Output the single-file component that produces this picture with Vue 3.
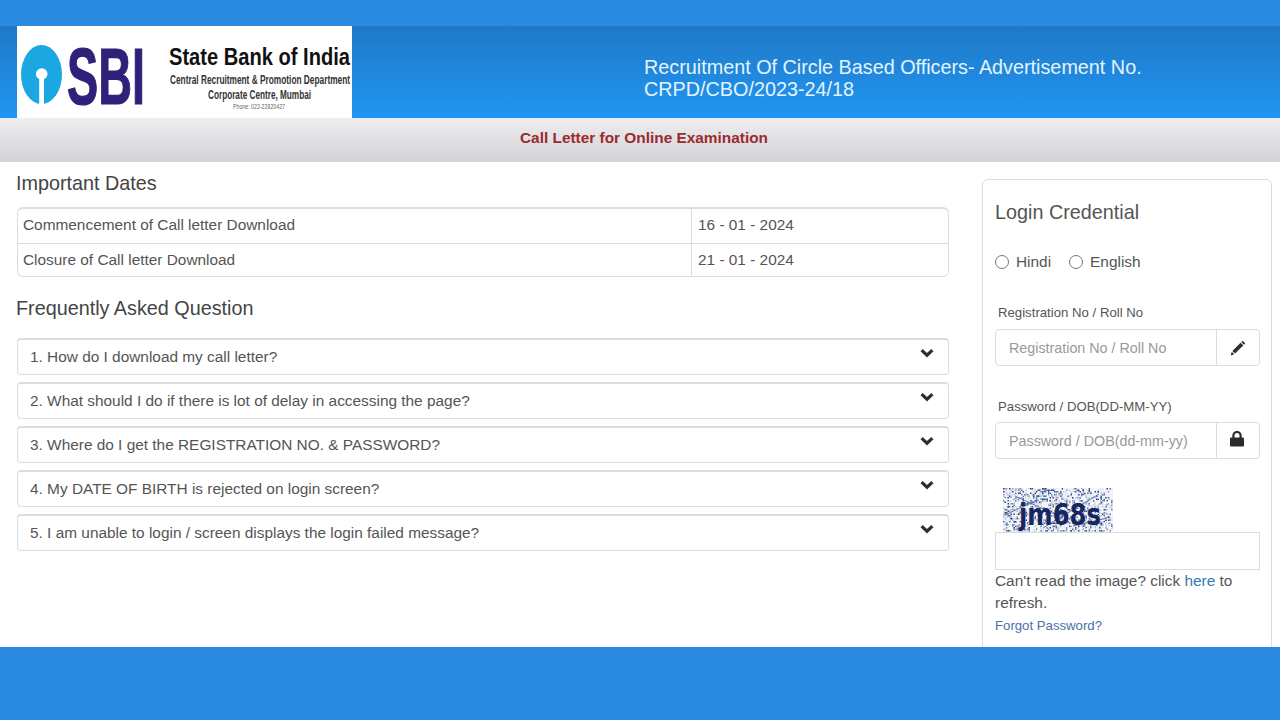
<template>
  <div class="page">
    <div class="top-strip"></div>
    <header class="header">
      <svg class="logo" width="335" height="92" viewBox="0 0 335 92">
        <ellipse cx="24.5" cy="48.5" rx="20.5" ry="29.5" fill="#1aa7e2" />
        <rect x="22.2" y="48" width="4.8" height="31" fill="#fff" />
        <circle cx="24.7" cy="48" r="5.8" fill="#fff" />
        <text x="50" y="77.5" textLength="78" lengthAdjust="spacingAndGlyphs" class="sbi-text">SBI</text>
        <text x="152" y="39" textLength="181" lengthAdjust="spacingAndGlyphs" class="logo-name">State Bank of India</text>
        <text x="153" y="58" textLength="180" lengthAdjust="spacingAndGlyphs" class="logo-dept">Central Recruitment &amp; Promotion Department</text>
        <text x="191" y="73" textLength="103" lengthAdjust="spacingAndGlyphs" class="logo-dept">Corporate Centre, Mumbai</text>
        <text x="216" y="83" textLength="52" lengthAdjust="spacingAndGlyphs" class="logo-phone">Phone: 022-22820427</text>
      </svg>
      <h1 class="header-title">Recruitment Of Circle Based Officers- Advertisement No.<br />CRPD/CBO/2023-24/18</h1>
    </header>
    <div class="subheader">Call Letter for Online Examination</div>

    <main class="main">
      <section class="left">
        <h2 class="heading first">Important Dates</h2>
        <div class="dates">
          <div v-for="d in dates" :key="d.label" class="date-row">
            <div class="date-label">{{ d.label }}</div>
            <div class="date-value">{{ d.value }}</div>
          </div>
        </div>
        <h2 class="heading second">Frequently Asked Question</h2>
        <div class="faq-list">
          <div v-for="q in questions" :key="q" class="faq-item">
            <span>{{ q }}</span>
            <svg class="chevron" width="14" height="11" viewBox="0 0 14 11">
              <path d="M1.6 3.2 7 8.2l5.4-5" fill="none" stroke="#2f2f2f" stroke-width="3.2" />
            </svg>
          </div>
        </div>
      </section>

      <aside class="login">
        <h2 class="login-title">Login Credential</h2>
        <div class="radios">
          <label class="radio"><input type="radio" name="lang" />Hindi</label>
          <label class="radio"><input type="radio" name="lang" />English</label>
        </div>

        <div class="field-label reg">Registration No / Roll No</div>
        <div class="input-group">
          <input type="text" placeholder="Registration No / Roll No" />
          <span class="addon">
            <svg width="16" height="16" viewBox="0 0 16 16">
              <path d="M12.6 0.8 15.2 3.4 13.9 4.7 11.3 2.1ZM10.6 2.8 13.2 5.4 5 13.6 2.4 11ZM1.8 11.8 4.2 14.2 0.6 15.4Z" fill="#2b2b2b" />
            </svg>
          </span>
        </div>

        <div class="field-label pwd">Password / DOB(DD-MM-YY)</div>
        <div class="input-group">
          <input type="text" placeholder="Password / DOB(dd-mm-yy)" />
          <span class="addon lock">
            <svg width="14" height="16" viewBox="0 0 14 16">
              <path d="M3.4 7V4.6a3.6 3.6 0 0 1 7.2 0V7" fill="none" stroke="#2b2b2b" stroke-width="2.2" />
              <rect x="0" y="6.5" width="14" height="9" rx="1" fill="#2b2b2b" />
            </svg>
          </span>
        </div>

        <div class="captcha">
          <svg width="110" height="44" viewBox="0 0 110 44">
            <rect width="110" height="44" fill="#eceef3" />
            <rect v-for="(p, i) in noise" :key="i" :x="p.x" :y="p.y" width="1.5" height="1.5" :fill="p.c" />
            <path d="M12 8 60 30M40 40 96 6M4 26 30 14M70 38 104 30" stroke="#5b76ad" stroke-width="1" fill="none" />
            <text x="16" y="37" textLength="82" lengthAdjust="spacingAndGlyphs" class="captcha-text">jm68s</text>
          </svg>
        </div>
        <input class="captcha-input" type="text" />
        <p class="refresh">Can't read the image? click <a>here</a> to refresh.</p>
        <a class="forgot">Forgot Password?</a>
      </aside>
    </main>

    <footer class="footer"></footer>
  </div>
</template>

<script setup>
const dates = [
  { label: 'Commencement of Call letter Download', value: '16 - 01 - 2024' },
  { label: 'Closure of Call letter Download', value: '21 - 01 - 2024' },
]

const questions = [
  '1. How do I download my call letter?',
  '2. What should I do if there is lot of delay in accessing the page?',
  '3. Where do I get the REGISTRATION NO. & PASSWORD?',
  '4. My DATE OF BIRTH is rejected on login screen?',
  '5. I am unable to login / screen displays the login failed message?',
]

// speckle behind the captcha word, seeded so each run looks the same
let seed = 68
function rand() {
  seed = (seed * 16807) % 2147483647
  return seed / 2147483647
}
const colors = ['#ffffff', '#ffffff', '#ffffff', '#b9c3d8', '#8ea0c6', '#5b76ad', '#2f4a8c']
const noise = []
for (let i = 0; i < 1600; i++) {
  noise.push({
    x: Math.floor(rand() * 73) * 1.5,
    y: Math.floor(rand() * 29) * 1.5,
    c: colors[Math.floor(rand() * colors.length)],
  })
}
</script>

<style>
html,
body {
  margin: 0;
  overflow: hidden;
}
</style>

<style scoped>
.page {
  width: 1280px;
  height: 720px;
  display: flex;
  flex-direction: column;
  overflow: hidden;
  background: #fff;
  font-family: "Liberation Sans", Arial, sans-serif;
  color: #555;
}

.top-strip {
  height: 26px;
  background: #2a8ae0;
}

.header {
  height: 92px;
  display: flex;
  align-items: center;
  padding-left: 17px;
  background: linear-gradient(#1f78c6, #2196f3);
}

.logo {
  flex-shrink: 0;
  display: block;
  background: #fff;
}

.sbi-text {
  font-family: "Liberation Sans", sans-serif;
  font-size: 79px;
  font-weight: 700;
  fill: #2e2179;
  stroke: #2e2179;
  stroke-width: 1.2px;
}

.logo-name {
  font-family: "Liberation Sans", sans-serif;
  font-size: 23px;
  font-weight: 700;
  fill: #111;
}

.logo-dept {
  font-family: "Liberation Sans", sans-serif;
  font-size: 12px;
  font-weight: 700;
  fill: #333;
}

.logo-phone {
  font-family: "Liberation Sans", sans-serif;
  font-size: 7px;
  fill: #666;
}

.header-title {
  margin: 12px 0 0 292px;
  font-size: 19.8px;
  font-weight: 400;
  line-height: 22px;
  color: #e4f4ff;
  white-space: nowrap;
}

.subheader {
  height: 44px;
  line-height: 40px;
  box-sizing: border-box;
  text-align: center;
  font-size: 15.4px;
  font-weight: 700;
  padding-left: 8px;
  color: #9c2a2e;
  background: linear-gradient(#eeeef0, #d3d3d5);
}

.main {
  height: 485px;
  display: flex;
  justify-content: space-between;
  overflow: hidden;
  padding: 0 8px 0 16px;
}

.left {
  width: 933px;
}

.heading {
  margin: 0;
  font-size: 19.8px;
  font-weight: 400;
  line-height: 22px;
  color: #444;
}

.heading.first {
  margin-top: 10px;
}

.heading.second {
  margin-top: 20px;
}

.dates {
  margin: 13px 0 0 1px;
  border: 1px solid #ddd;
  border-top: 2px solid #ddd;
  border-radius: 6px;
}

.date-row {
  display: flex;
  height: 34px;
  box-sizing: border-box;
  line-height: 32px;
  font-size: 15.4px;
}

.date-row + .date-row {
  border-top: 1px solid #ddd;
  height: 33px;
  line-height: 31px;
}

.date-label {
  width: 674px;
  padding-left: 5px;
  box-sizing: border-box;
  border-right: 1px solid #ddd;
}

.date-value {
  padding-left: 6px;
}

.faq-list {
  margin: 19px 0 0 1px;
  display: flex;
  flex-direction: column;
  gap: 7px;
}

.faq-item {
  height: 37px;
  box-sizing: border-box;
  display: flex;
  align-items: center;
  justify-content: space-between;
  padding: 0 14px 0 12px;
  border: 1px solid #ddd;
  border-top-width: 2px;
  border-radius: 4px;
  font-size: 15.4px;
}

.chevron {
  margin-top: -10px;
}

.login {
  width: 290px;
  height: 520px;
  margin-top: 17px;
  box-sizing: border-box;
  flex-shrink: 0;
  padding: 0 11px 0 12px;
  border: 1px solid #ddd;
  border-radius: 6px;
}

.login-title {
  margin: 21px 0 0;
  font-size: 19.8px;
  font-weight: 400;
  line-height: 22px;
  color: #555;
}

.radios {
  margin-top: 29px;
  display: flex;
  gap: 18px;
  height: 20px;
}

.radio {
  display: flex;
  align-items: center;
  font-size: 15.4px;
}

.radio input {
  width: 14px;
  height: 14px;
  margin: 0 7px 0 0;
}

.field-label {
  margin-left: 3px;
  font-size: 13.2px;
  line-height: 16px;
  color: #555;
}

.field-label.reg {
  margin-top: 33px;
}

.field-label.pwd {
  margin-top: 33px;
}

.input-group {
  margin-top: 8px;
  height: 37px;
  box-sizing: border-box;
  display: flex;
  border: 1px solid #ddd;
  border-radius: 4px;
}

.field-label.pwd + .input-group {
  margin-top: 7px;
}

.input-group input {
  flex: 1;
  min-width: 0;
  border: 0;
  outline: 0;
  background: transparent;
  padding: 0 13px;
  font: 14.3px "Liberation Sans", Arial, sans-serif;
}

.input-group input::placeholder {
  color: #999;
  opacity: 1;
}

.addon {
  width: 43px;
  flex-shrink: 0;
  box-sizing: border-box;
  display: flex;
  align-items: center;
  justify-content: center;
  border-left: 1px solid #ddd;
}

.addon.lock svg {
  margin: -3px 2px 0 0;
}

.captcha {
  margin: 29px 0 0 8px;
  height: 44px;
}

.captcha svg {
  display: block;
}

.captcha-text {
  font-family: "DejaVu Sans", sans-serif;
  font-size: 31px;
  font-weight: 700;
  fill: #17265e;
}

.captcha-input {
  display: block;
  width: 100%;
  height: 38px;
  margin: 0;
  box-sizing: border-box;
  border: 1px solid #ddd;
  outline: 0;
}

.refresh {
  margin: 0;
  font-size: 15.4px;
  line-height: 22px;
}

.refresh a {
  color: #337ab7;
}

.forgot {
  display: block;
  margin-top: 3px;
  font-size: 13.2px;
  line-height: 18px;
  color: #4a70a8;
}

.footer {
  height: 73px;
  flex-shrink: 0;
  background: #2a8ae0;
}
</style>
